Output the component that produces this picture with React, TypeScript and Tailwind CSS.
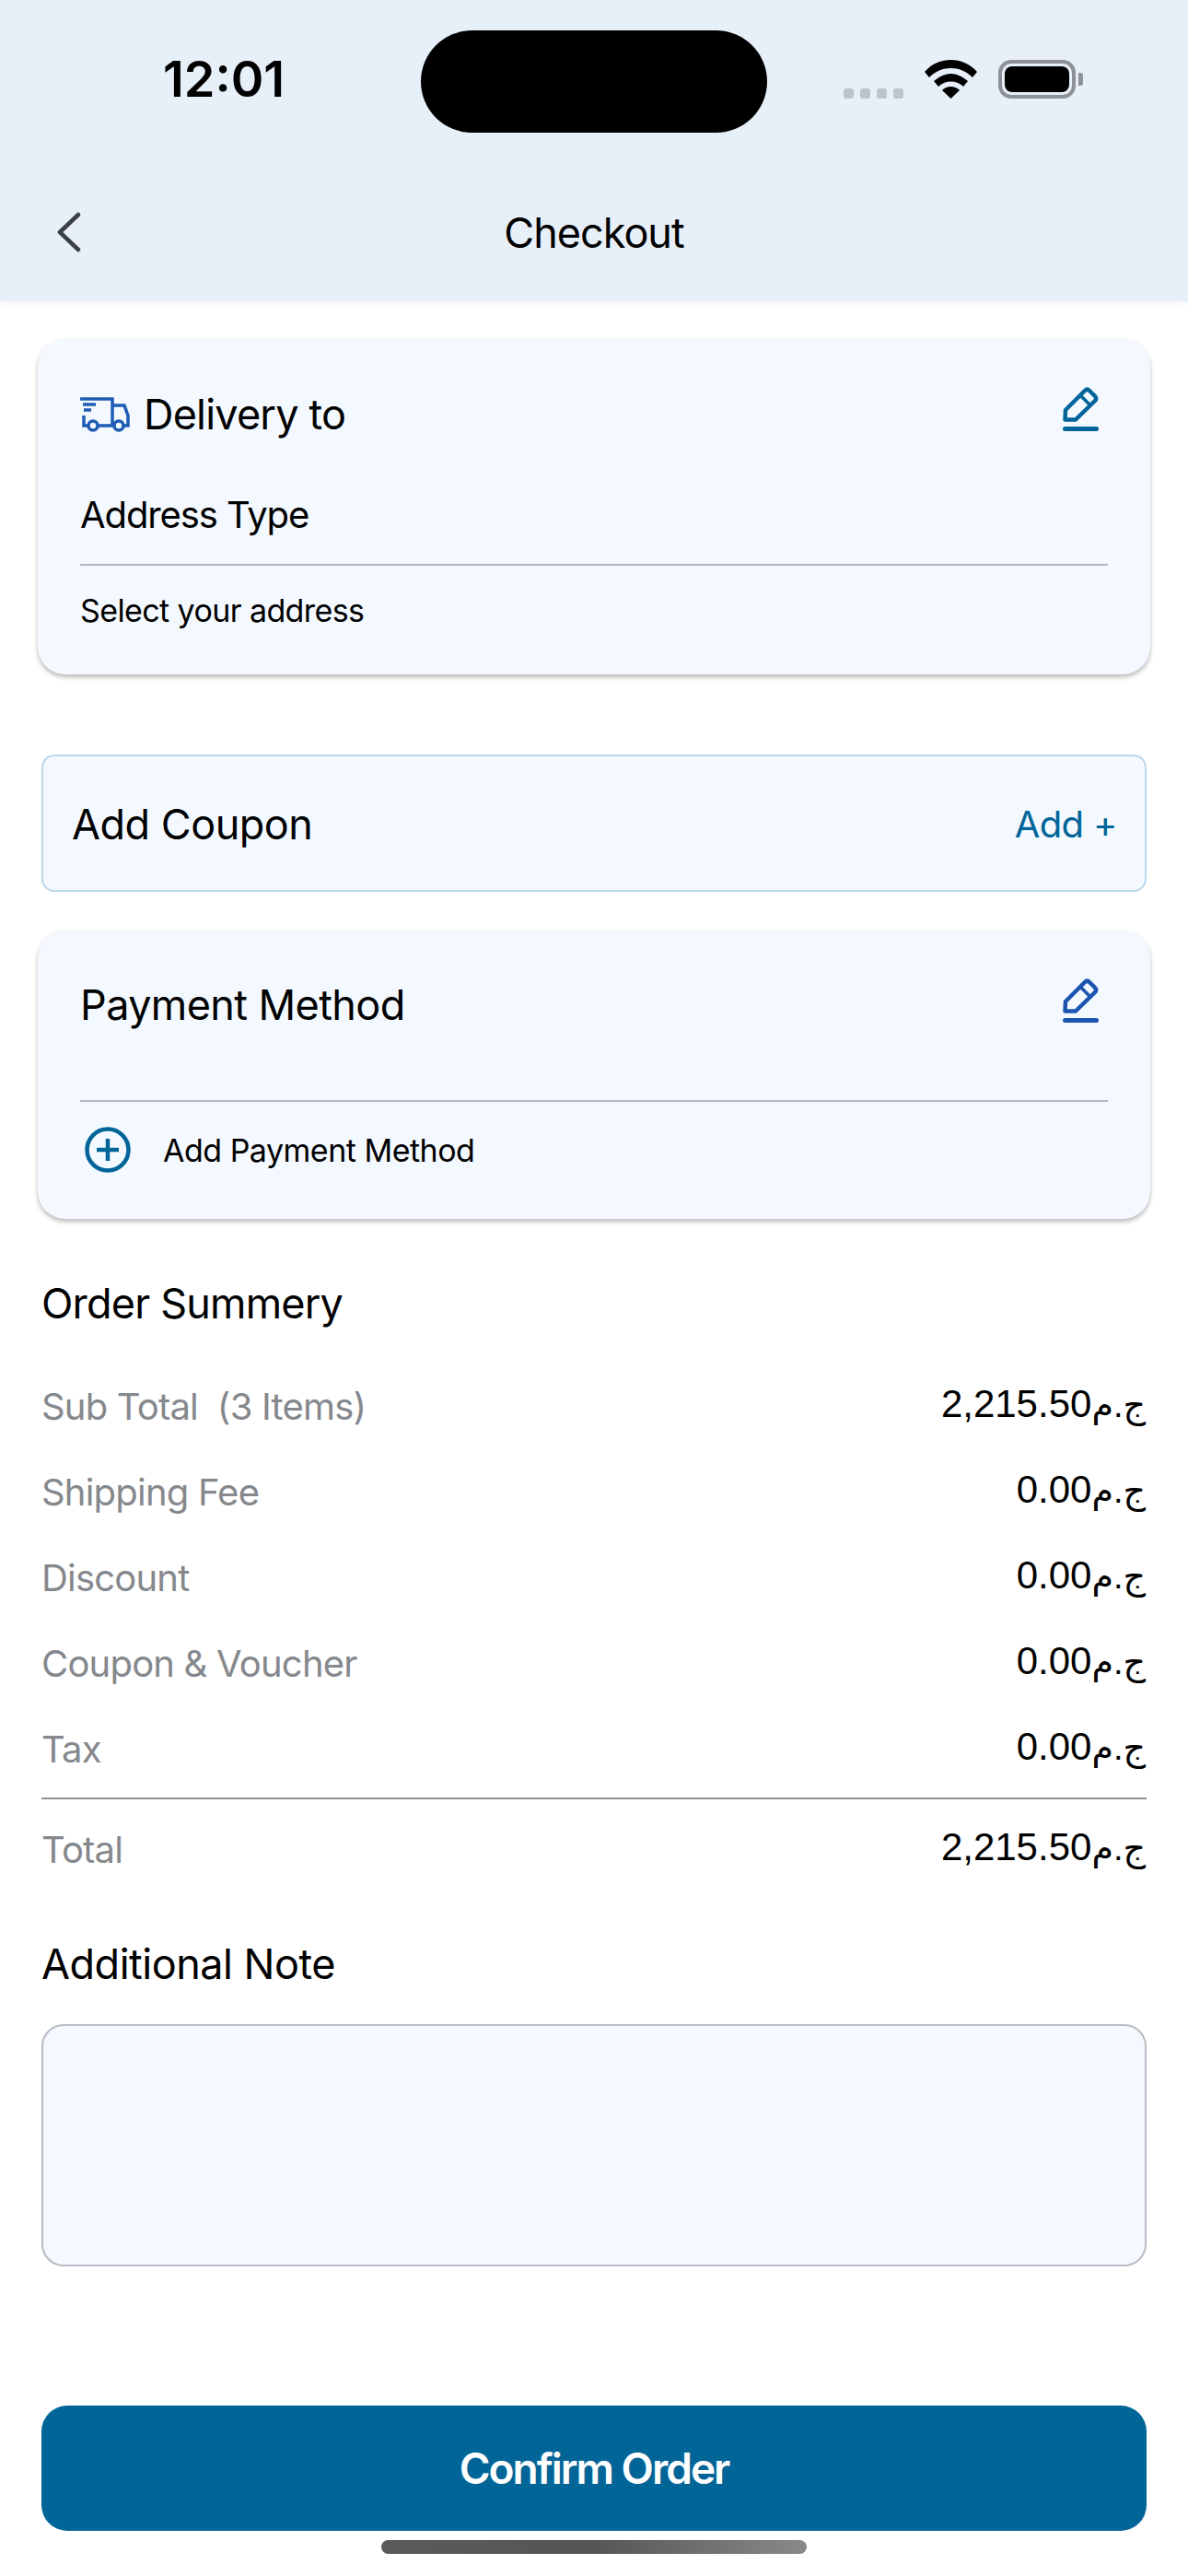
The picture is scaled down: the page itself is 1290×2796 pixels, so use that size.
import React from 'react';

const rows = [
  { label: 'Sub Total  (3 Items)', value: '2,215.50' },
  { label: 'Shipping Fee', value: '0.00' },
  { label: 'Discount', value: '0.00' },
  { label: 'Coupon & Voucher', value: '0.00' },
  { label: 'Tax', value: '0.00' },
];

const PencilIcon = ({ color }: { color: string }) => (
  <svg width="39" height="49" viewBox="0 0 39 49" fill="none" stroke={color}>
    <path d="M3 26 L24 5 Q26.5 2.5 29 5 L35 11 Q37.5 13.5 35 16 L14 36.5 H2.5 Z" strokeWidth="4.5" strokeLinejoin="round" />
    <path d="M19 10 L30 21" strokeWidth="3.5" />
    <rect x="0" y="44" width="39" height="5" rx="2.5" fill={color} stroke="none" />
  </svg>
);

const TruckIcon = () => (
  <svg width="54" height="38" viewBox="0 0 54 38" fill="none" stroke="#1f5cb5" strokeWidth="3.5">
    <path d="M0 2 H35 V31 H20" />
    <path d="M35 9 H48 L52 20 V31 H48" />
    <path d="M3 8 H17 M4 14 H12" />
    <path d="M4 20 V31 H8" />
    <circle cx="14" cy="31" r="5" />
    <circle cx="42" cy="31" r="5" />
  </svg>
);

const Amount = ({ value }: { value: string }) => (
  <span className="pb-[6px] pr-[1px] font-['Liberation_Sans','DejaVu_Sans',sans-serif] text-[42px] leading-none tracking-[0.2px] text-black">
    {value}
    <span className="text-[38px] tracking-[-1px]">ج.م</span>
  </span>
);

export default function App() {
  return (
    <div className="flex h-[2796px] w-[1290px] flex-col overflow-hidden bg-white font-['Inter','Liberation_Sans',sans-serif] text-black">
      <header className="h-[327px] bg-[#e7eff9] shadow-[0_4px_10px_rgba(0,0,0,0.04)]">
        <div className="flex pl-[177px] pt-[33px]">
          <div className="flex h-[74px] w-[280px] items-end">
            <span className="text-[54px] font-semibold leading-[42px]">12:01</span>
          </div>
          <div className="h-[111px] w-[376px] rounded-[56px] bg-black" />
          <div className="ml-[83px] flex h-[74px] items-end">
            <div className="flex gap-[7px]">
              <i className="block h-[11px] w-[11px] rounded-[3px] bg-[#bcc3cc]" />
              <i className="block h-[11px] w-[11px] rounded-[3px] bg-[#bcc3cc]" />
              <i className="block h-[11px] w-[11px] rounded-[3px] bg-[#bcc3cc]" />
              <i className="block h-[11px] w-[11px] rounded-[3px] bg-[#bcc3cc]" />
            </div>
            <svg className="ml-[23px]" width="57" height="42" viewBox="0 0 57 42" fill="black">
              <path d="M28.5 0 C39 0 49 4 57 13 L52 19 C45 12 37 9 28.5 9 C20 9 12 12 5 19 L0 13 C8 4 18 0 28.5 0 Z" />
              <path d="M28.5 15 C35 15 41 18 47 23 L42 29 C38 25 33 23.5 28.5 23.5 C24 23.5 19 25 15 29 L10 23 C16 18 22 15 28.5 15 Z" />
              <path d="M28.5 29 C32 29 35 30 38 33 L28.5 42 L19 33 C22 30 25 29 28.5 29 Z" />
            </svg>
            <div className="ml-[23px] flex items-center">
              <div className="flex h-[42px] w-[84px] items-center justify-center rounded-[14px] border-[4px] border-[#8e9296]">
                <div className="h-[28px] w-[70px] rounded-[8px] bg-black" />
              </div>
              <div className="ml-[3px] h-[14px] w-[5px] rounded-r-[3px] bg-[#8e9296]" />
            </div>
          </div>
        </div>
        <div className="mt-[75px] grid h-[66px] grid-cols-[1fr_auto_1fr] items-center pl-[62px]">
          <svg width="26" height="44" viewBox="0 0 26 44" fill="none" stroke="#3c3f44" strokeWidth="4.5" strokeLinecap="round" strokeLinejoin="round">
            <path d="M23 3 L3 22 L23 41" />
          </svg>
          <h1 className="pr-[62px] text-[45px] font-normal leading-none tracking-[-1px]">Checkout</h1>
        </div>
      </header>

      <main className="flex flex-1 flex-col">
        <section className="mx-[41px] mt-[41px] h-[364px] rounded-[30px] bg-[#f4f9ff] px-[46px] shadow-[0_3px_5px_rgba(0,0,0,0.28)]">
          <div className="flex h-[112px] items-end justify-between">
            <div className="flex items-center gap-[15px] pb-[2px]">
              <TruckIcon />
              <span className="text-[45px] leading-[56px] tracking-[-0.8px]">Delivery to</span>
            </div>
            <div className="mb-[12px] mr-[10px]">
              <PencilIcon color="#01659a" />
            </div>
          </div>
          <p className="mt-[55px] text-[40px] leading-[48px] tracking-[-1.1px]">Address Type</p>
          <div className="mt-[29px] h-[2px] bg-[#b3b7be]" />
          <p className="mt-[29px] text-[34px] leading-[40px] tracking-[-0.6px]">Select your address</p>
        </section>

        <section className="mx-[45px] mt-[87px] flex h-[149px] items-center justify-between rounded-[14px] border-2 border-[#bcd8ec] bg-[#f4f9ff] pl-[31px] pr-[30px] pt-[3px]">
          <span className="text-[45px] leading-[56px] tracking-[-0.5px]">Add Coupon</span>
          <span className="text-[40px] leading-[48px] tracking-[-0.6px] text-[#01659a]">Add +</span>
        </section>

        <section className="mx-[41px] mt-[42px] h-[313px] rounded-[30px] bg-[#f4f9ff] px-[46px] shadow-[0_3px_5px_rgba(0,0,0,0.28)]">
          <div className="flex h-[109px] items-end justify-between">
            <span className="text-[45px] leading-[56px] tracking-[-0.6px]">Payment Method</span>
            <div className="mb-[9px] mr-[10px]">
              <PencilIcon color="#1b55b0" />
            </div>
          </div>
          <div className="mt-[75px] h-[2px] bg-[#b3b7be]" />
          <div className="mt-[27px] flex items-center gap-[35px] pl-[5px]">
            <svg width="50" height="50" viewBox="0 0 50 50" fill="none" stroke="#01659a">
              <circle cx="25" cy="25" r="22.5" strokeWidth="4.5" />
              <path d="M25 13 V37 M13 25 H37" strokeWidth="4.5" />
            </svg>
            <span className="pt-[2px] text-[34px] leading-[40px] tracking-[-0.5px]">Add Payment Method</span>
          </div>
        </section>

        <h2 className="mx-[45px] mt-[64px] text-[45px] font-normal leading-[56px] tracking-[-0.8px]">Order Summery</h2>

        <div className="mx-[45px] mt-[59px] flex flex-col gap-[43px]">
          {rows.map((row) => (
            <div key={row.label} className="flex h-[50px] items-center justify-between">
              <span className="whitespace-pre text-[40px] leading-[48px] tracking-[-0.8px] text-[#85888c]">{row.label}</span>
              <Amount value={row.value} />
            </div>
          ))}
        </div>

        <div className="mx-[45px] mt-[27px] h-[2px] bg-[#8f9196]" />

        <div className="mx-[45px] mt-[30px] flex h-[50px] items-center justify-between">
          <span className="text-[40px] leading-[48px] tracking-[-0.8px] text-[#85888c]">Total</span>
          <Amount value="2,215.50" />
        </div>

        <h2 className="mx-[45px] mt-[71px] text-[45px] font-normal leading-[56px] tracking-[-0.5px]">Additional Note</h2>

        <div className="mx-[45px] mt-[37px] h-[263px] rounded-[24px] border-2 border-[#b9bcc2] bg-[#f4f9ff]" />

        <button className="mx-[45px] mt-[151px] h-[136px] rounded-[28px] bg-[#026598] text-[46px] font-semibold tracking-[-2px] text-white">
          Confirm Order
        </button>

        <div className="mx-auto mt-[10px] h-[15px] w-[462px] rounded-[8px] bg-gradient-to-r from-[#5a5a5a] via-[#555555] to-[#8a8a8a]" />
      </main>
    </div>
  );
}
